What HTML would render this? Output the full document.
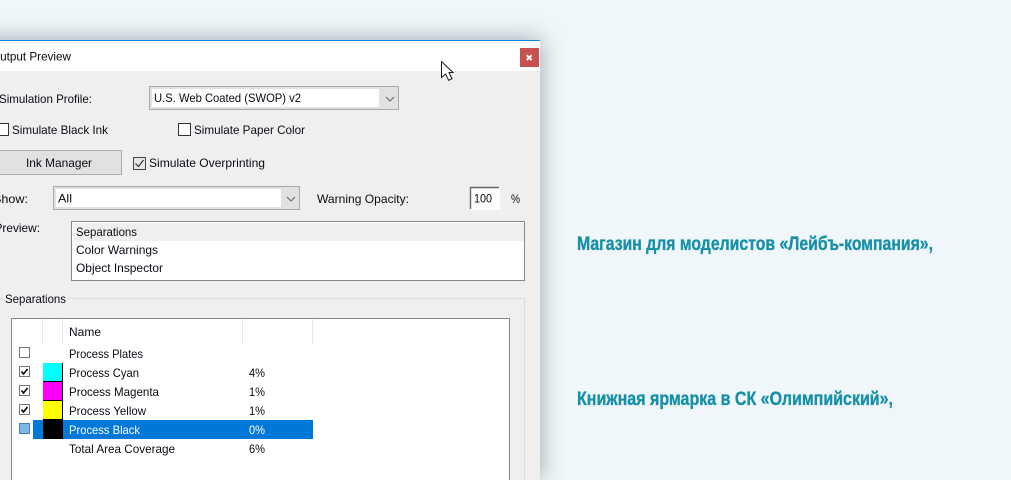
<!DOCTYPE html>
<html lang="ru">
<head>
<meta charset="utf-8">
<title>Output Preview</title>
<style>
html,body{margin:0;padding:0;width:1011px;height:480px;overflow:hidden;background:#f0f7fa}
#wrap{position:absolute;left:0;top:0;width:1011px;height:480px;overflow:hidden;background:#f0f7fa}
#dlg{position:absolute;left:-40px;top:40px;width:580px;height:440px;background:#efefef;box-shadow:0 0 22px rgba(40,50,60,.42)}
svg{position:absolute;left:0;top:0;display:block}
text{font-family:"Liberation Sans",sans-serif;font-size:12px;fill:#0a0a14}
.h{font-size:19px;font-weight:bold;fill:#1590a8;stroke:#1590a8;stroke-width:.35px}
rect.c{shape-rendering:crispEdges}
</style>
</head>
<body>
<div id="wrap">
<div id="dlg"></div>
<svg width="1011" height="480" viewBox="0 0 1011 480" xmlns="http://www.w3.org/2000/svg">
<!-- title bar -->
<rect class="c" x="0" y="40" width="540" height="31" fill="#fff"/>
<rect class="c" x="0" y="40" width="540" height="1" fill="#0f84dc"/>
<rect class="c" x="520" y="48" width="19" height="19" fill="#c75050"/>
<path d="M526.700 55.200l5 5M531.700 55.200l-5 5" stroke="#fff" stroke-width="1.9" fill="none"/>
<text x="-9" y="60.500" textLength="80" lengthAdjust="spacingAndGlyphs">Output Preview</text>

<!-- simulation profile -->
<text x="-1" y="103" textLength="93" lengthAdjust="spacingAndGlyphs">Simulation Profile:</text>
<rect class="c" x="149" y="86" width="250" height="24" fill="#a9a9a9"/>
<rect class="c" x="150" y="87" width="248" height="22" fill="#e1e1e1"/>
<rect class="c" x="152" y="89" width="227" height="18" fill="#fff"/>
<text x="154" y="102" textLength="147" lengthAdjust="spacingAndGlyphs">U.S. Web Coated (SWOP) v2</text>
<path d="M386 97l4 4 4-4" stroke="#666" fill="none"/>

<!-- checks -->
<rect class="c" x="-3.500" y="123.500" width="12" height="12" fill="#fff" stroke="#333"/>
<text x="12" y="134" textLength="96" lengthAdjust="spacingAndGlyphs">Simulate Black Ink</text>
<rect class="c" x="178.500" y="123.500" width="12" height="12" fill="#fff" stroke="#333"/>
<text x="194" y="134" textLength="111" lengthAdjust="spacingAndGlyphs">Simulate Paper Color</text>

<rect class="c" x="-5" y="150" width="127" height="25" fill="#adadad"/>
<rect class="c" x="-4" y="151" width="125" height="23" fill="#e1e1e1"/>
<text x="26" y="167" textLength="66" lengthAdjust="spacingAndGlyphs">Ink Manager</text>
<rect class="c" x="133.500" y="157.500" width="12" height="12" fill="#e6e6e6" stroke="#444"/>
<path d="M135.500 163.500l3 3 5-6.500" stroke="#333" stroke-width="1.2" fill="none"/>
<text x="149" y="167" textLength="116" lengthAdjust="spacingAndGlyphs">Simulate Overprinting</text>

<!-- show -->
<text x="-7" y="203" textLength="35" lengthAdjust="spacingAndGlyphs">Show:</text>
<rect class="c" x="53" y="186" width="247" height="24" fill="#a9a9a9"/>
<rect class="c" x="54" y="187" width="245" height="22" fill="#e1e1e1"/>
<rect class="c" x="56" y="189" width="225" height="18" fill="#fff"/>
<text x="58" y="202.500" textLength="14" lengthAdjust="spacingAndGlyphs">All</text>
<path d="M287 197l4 4 4-4" stroke="#666" fill="none"/>
<text x="317" y="203" textLength="92" lengthAdjust="spacingAndGlyphs">Warning Opacity:</text>
<rect class="c" x="470" y="187" width="30" height="23" fill="#fff"/>
<path d="M470.500 209V187.500H499" stroke="#666" stroke-width="1.4" fill="none"/>
<text x="474" y="202.500" textLength="18" lengthAdjust="spacingAndGlyphs">100</text>
<text x="511" y="203" textLength="9" lengthAdjust="spacingAndGlyphs">%</text>

<!-- preview -->
<text x="-5.500" y="232" textLength="45.500" lengthAdjust="spacingAndGlyphs">Preview:</text>
<rect class="c" x="71.500" y="221.500" width="453" height="59" fill="#fff" stroke="#828790"/>
<rect class="c" x="73" y="223" width="451" height="18" fill="#efefef"/>
<text x="76" y="236" textLength="61" lengthAdjust="spacingAndGlyphs">Separations</text>
<text x="76" y="254" textLength="82" lengthAdjust="spacingAndGlyphs">Color Warnings</text>
<text x="76" y="272" textLength="87" lengthAdjust="spacingAndGlyphs">Object Inspector</text>

<!-- group -->
<path d="M0 298.500H3M68 298.500H524.500V480" stroke="#dcdcdc" fill="none" shape-rendering="crispEdges"/>
<text x="5" y="303" textLength="61" lengthAdjust="spacingAndGlyphs">Separations</text>

<!-- table -->
<rect class="c" x="11" y="318" width="499" height="162" fill="#828790"/>
<rect class="c" x="12" y="319" width="497" height="161" fill="#fff"/>
<path d="M42.500 319V344M62.500 319V344M242.500 319V344M312.500 319V344" stroke="#e8e8e8" shape-rendering="crispEdges"/>
<text x="69" y="336" textLength="32" lengthAdjust="spacingAndGlyphs">Name</text>

<rect class="c" x="19.500" y="347.500" width="10" height="10" fill="#fff" stroke="#777"/>
<rect class="c" x="19.500" y="366.500" width="10" height="10" fill="#fff" stroke="#777"/>
<rect class="c" x="19.500" y="385.500" width="10" height="10" fill="#fff" stroke="#777"/>
<rect class="c" x="19.500" y="404.500" width="10" height="10" fill="#fff" stroke="#777"/>
<path d="M21.500 371.500l2 2.500 4-5M21.500 390.500l2 2.500 4-5M21.500 409.500l2 2.500 4-5" stroke="#000" stroke-width="1.6" fill="none"/>

<rect class="c" x="33" y="420" width="280" height="19" fill="#0078d7"/>
<rect class="c" x="19.500" y="423.500" width="10" height="10" fill="#7cb6ea" stroke="#4a80b0"/>

<rect class="c" x="43" y="363" width="20" height="19" fill="#000"/>
<rect class="c" x="43" y="363" width="19" height="18" fill="#0ff"/>
<rect class="c" x="43" y="382" width="20" height="19" fill="#000"/>
<rect class="c" x="43" y="382" width="19" height="18" fill="#f0f"/>
<rect class="c" x="43" y="401" width="20" height="19" fill="#000"/>
<rect class="c" x="43" y="401" width="19" height="18" fill="#ff0"/>
<rect class="c" x="43" y="419" width="20" height="20" fill="#000"/>

<text x="69" y="358" textLength="74" lengthAdjust="spacingAndGlyphs">Process Plates</text>
<text x="69" y="377" textLength="70" lengthAdjust="spacingAndGlyphs">Process Cyan</text>
<text x="69" y="396" textLength="90" lengthAdjust="spacingAndGlyphs">Process Magenta</text>
<text x="69" y="415" textLength="77" lengthAdjust="spacingAndGlyphs">Process Yellow</text>
<text x="69" y="434" textLength="71" lengthAdjust="spacingAndGlyphs" style="fill:#fff">Process Black</text>
<text x="69" y="453" textLength="106" lengthAdjust="spacingAndGlyphs">Total Area Coverage</text>
<text x="249" y="377" textLength="16" lengthAdjust="spacingAndGlyphs">4%</text>
<text x="249" y="396" textLength="16" lengthAdjust="spacingAndGlyphs">1%</text>
<text x="249" y="415" textLength="16" lengthAdjust="spacingAndGlyphs">1%</text>
<text x="249" y="434" textLength="16" lengthAdjust="spacingAndGlyphs" style="fill:#fff">0%</text>
<text x="249" y="453" textLength="16" lengthAdjust="spacingAndGlyphs">6%</text>

<!-- cursor -->
<path d="M441.500 61.500V77.500L445.500 74L448.700 80.300L452 78.700L449 72.500H453Z" fill="#fff" stroke="#1a1a1a" stroke-width="1"/>

<!-- right text -->
<text class="h" x="577" y="250" textLength="356" lengthAdjust="spacingAndGlyphs">Магазин для моделистов «Лейбъ-компания»,</text>
<text class="h" x="577" y="405" textLength="316" lengthAdjust="spacingAndGlyphs">Книжная ярмарка в СК «Олимпийский»,</text>
</svg>
</div>
</body>
</html>
